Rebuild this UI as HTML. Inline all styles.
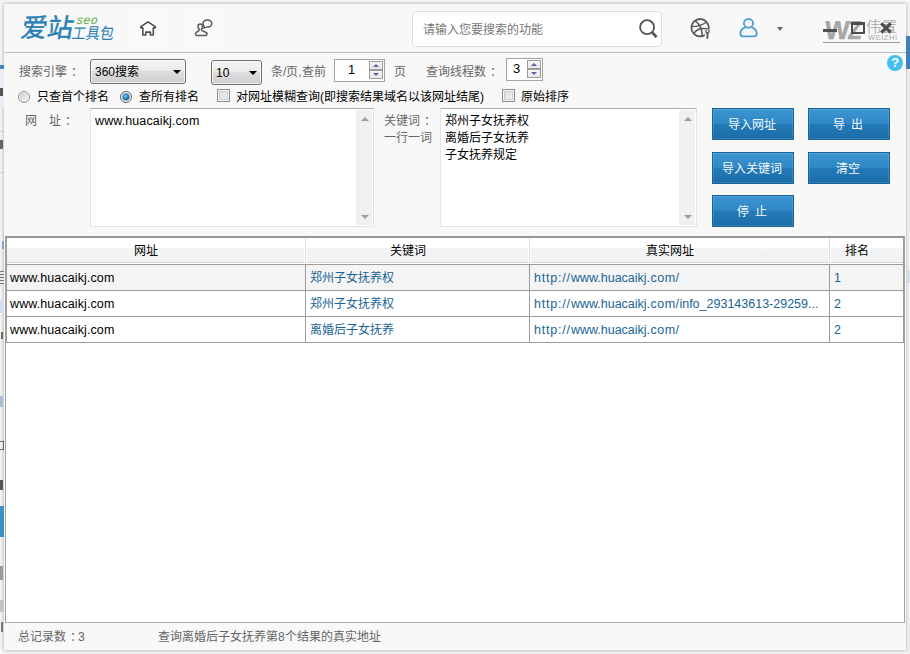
<!DOCTYPE html>
<html lang="zh-CN">
<head>
<meta charset="utf-8">
<title>爱站SEO工具包</title>
<style>
*{box-sizing:border-box;margin:0;padding:0}
html,body{width:910px;height:654px;overflow:hidden}
body{position:relative;background:#f7f7f7;font-family:"Liberation Sans",sans-serif;font-size:12px;color:#000}
.abs{position:absolute}
#win{position:absolute;left:4px;top:4px;width:902px;height:646px;background:#f8f8f8;box-shadow:0 0 4px rgba(0,0,0,.36)}
#sep{position:absolute;left:4px;top:52px;width:902px;height:1px;background:#bfbfbf}
.lbl{position:absolute;color:#666;white-space:nowrap;line-height:14px;height:14px}
.blk{position:absolute;color:#000;white-space:nowrap;line-height:14px;height:14px}

.combo{position:absolute;height:25px;border:1px solid #707070;border-radius:3px;background:linear-gradient(#f4f4f4 0%,#ebebeb 45%,#dddddd 50%,#cfcfcf 100%);box-shadow:inset 0 0 0 1px rgba(255,255,255,.7)}
.combo span{position:absolute;left:4px;top:5px;line-height:14px;color:#000;white-space:nowrap}
.combo i{position:absolute;right:4px;top:10px;width:0;height:0;border-left:4px solid transparent;border-right:4px solid transparent;border-top:4px solid #000}
.spin{position:absolute;background:#fff;border:1px solid #a3a3a3}
.spin span{position:absolute;top:3px;line-height:14px;color:#000;font-size:13px}
.spin b{position:absolute;right:1px;width:14px;height:9px;border:1px solid #9c9c9c;background:linear-gradient(#f6f6f6,#e6e6e6)}
.spin b::after{content:"";position:absolute;left:3px;top:2px;width:0;height:0;border-left:3px solid transparent;border-right:3px solid transparent}
.spin b.u{top:1px}.spin b.d{top:10px}
.spin b.u::after{border-bottom:3px solid #5563a8}
.spin b.d::after{border-top:3px solid #5563a8}
.radio{position:absolute;width:12px;height:12px;border-radius:50%;border:1px solid #8e8f8f;background:linear-gradient(135deg,#c9cdd1 10%,#f2f2f2 90%);box-shadow:inset 0 0 0 1px #f6f6f6}
.radio.on{border-color:#5d6670}
.radio.on::after{content:"";position:absolute;left:2px;top:2px;width:6px;height:6px;border-radius:50%;background:radial-gradient(circle at 42% 38%,#8fd8fa 0%,#2785c2 40%,#0d4876 100%);box-shadow:0 0 0 .5px #1a4f7c}
.chk{position:absolute;width:13px;height:13px;border:1px solid #8e8f8f;background:linear-gradient(135deg,#d8d8d8,#f6f6f6);box-shadow:inset 0 0 0 1px #f4f4f4, inset 0 0 0 2px #cfcfcf}

.ta{position:absolute;background:#fff;border:1px solid #e1e5ea;border-top-color:#a9abb0}
.ta .sb{position:absolute;right:1px;top:1px;bottom:1px;width:16px;background:#f0f0f0}
.ta .sb::before{content:"";position:absolute;left:5px;top:7px;width:0;height:0;border-left:4px solid transparent;border-right:4px solid transparent;border-bottom:4px solid #9c9c9c}
.ta .sb::after{content:"";position:absolute;left:5px;bottom:6px;width:0;height:0;border-left:4px solid transparent;border-right:4px solid transparent;border-top:4px solid #9c9c9c}
.ta p{position:absolute;left:4px;line-height:17px;height:17px;white-space:nowrap;color:#000}
.btn{position:absolute;width:82px;height:32px;border:1px solid #1a6299;background:linear-gradient(#3c96d1 0%,#2f87c5 48%,#237ab8 52%,#1b6da7 100%);color:#f4f9fd;text-align:center;padding-top:1px;padding-right:2px;line-height:31px;white-space:nowrap;box-shadow:inset 0 0 0 1px rgba(255,255,255,.12)}

#grid{position:absolute;left:5px;top:236px;width:900px;height:387px;border:1px solid #a2a2a2;border-top:2px solid #979797;border-bottom:1px solid #adadad;background:#fff;overflow:hidden}
#hdr{position:absolute;left:0;top:0;width:898px;height:26px;border-left:1px solid #9c9c9c;border-right:1px solid #9c9c9c;background:linear-gradient(#fff 0,#fff 10px,#f4f5f7 10px,#eff0f2 24px,#d6d6d6 24px,#d6d6d6 25px,#fff 25px)}
#hdr span{position:absolute;top:6px;line-height:14px;text-align:center;color:#000;white-space:nowrap}
#hdr i{position:absolute;top:0;width:3px;height:25px;background:linear-gradient(90deg,#fff 0,#fff 1px,#dcdcdc 1px,#dcdcdc 2px,#fff 2px)}
.row{position:absolute;left:0;width:898px;height:26px;border-top:1px solid #9c9c9c;border-left:1px solid #9c9c9c;border-right:1px solid #9c9c9c}
.row.last{border-bottom:1px solid #9c9c9c;height:27px}
.row.sel{background:#f4f4f4}
.row span{position:absolute;top:6px;line-height:14px;white-space:nowrap;font-size:12.5px}
.row span.k{font-size:12px;color:#1a6494}
.row span.u{color:#1a6494}
.row i{position:absolute;top:0;width:1px;height:26px;background:#9c9c9c}
#status{position:absolute;left:4px;top:624px;width:902px;height:26px;background:#f8f8f8}
.c{margin-left:4px}
.row b{font-weight:normal}
</style>
</head>
<body>
<div id="win"></div>
<div id="sep"></div>

<!-- fragments of background windows visible at the screen edges -->
<div class="abs" style="left:0;top:69px;width:4px;height:40px;background:#e9eef5"></div>
<div class="abs" style="left:0;top:88px;width:3px;height:8px;background:#555"></div>
<div class="abs" style="left:0;top:140px;width:3px;height:9px;background:#666"></div>
<div class="abs" style="left:0;top:131px;width:4px;height:1px;background:#d0d0d0"></div>
<div class="abs" style="left:0;top:172px;width:4px;height:1px;background:#d0d0d0"></div>
<div class="abs" style="left:2px;top:241px;width:2px;height:8px;background:#7da3d6"></div>
<div class="abs" style="left:0;top:271px;width:4px;height:13px;background:repeating-linear-gradient(#777 0,#777 1px,#e8e8e8 1px,#e8e8e8 3px)"></div>
<div class="abs" style="left:0;top:300px;width:4px;height:13px;background:#d3e0ef"></div>
<div class="abs" style="left:1px;top:332px;width:2px;height:7px;background:#666"></div>
<div class="abs" style="left:0;top:396px;width:3px;height:11px;background:#a9bfd6"></div>
<div class="abs" style="left:0;top:441px;width:4px;height:9px;border:1px solid #666;border-left:0"></div>
<div class="abs" style="left:0;top:480px;width:3px;height:10px;background:#555"></div>
<div class="abs" style="left:0;top:506px;width:4px;height:31px;background:#3f8fc8"></div>
<div class="abs" style="left:0;top:566px;width:3px;height:14px;background:#9a9a9a"></div>
<div class="abs" style="left:0;top:600px;width:4px;height:12px;background:#c4c4c4"></div>
<div class="abs" style="left:1px;top:622px;width:2px;height:10px;background:#777"></div>
<div class="abs" style="left:907px;top:69px;width:3px;height:585px;background:linear-gradient(90deg,#e4e4e4,#f2f2f2)"></div>
<div class="abs" style="left:907px;top:270px;width:3px;height:13px;background:#d3dcea"></div>
<!-- background strips outside window -->
<div class="abs" style="left:0;top:65px;width:4px;height:4px;background:#3f86c4"></div>
<div class="abs" style="left:906px;top:36px;width:4px;height:33px;background:#3b7fc0"></div>

<!-- logo -->
<div class="abs" id="logo1" style="left:19px;top:13px;font-size:26px;line-height:30px;color:#2a80b6;font-weight:500;-webkit-text-stroke:.45px #2a80b6;white-space:nowrap;transform:skewX(-10deg);transform-origin:left bottom">爱站</div>
<div class="abs" id="logo2" style="left:77px;top:14px;font-size:12px;line-height:12px;color:#5aa845;font-style:italic;white-space:nowrap;letter-spacing:.6px;transform:skewX(-6deg)">seo</div>
<div class="abs" id="logo3" style="left:70px;top:26px;font-size:14px;line-height:16px;color:#2a80b6;white-space:nowrap;transform:skewX(-10deg) scaleY(1.14);transform-origin:left bottom;font-weight:500">工具包</div>

<div class="abs" style="left:129px;top:10px;width:38px;height:35px;background:#fafafa"></div>
<div class="abs" style="left:184px;top:10px;width:38px;height:35px;background:#fafafa"></div>
<!-- home icon -->
<svg class="abs" style="left:138px;top:19px" width="20" height="19" viewBox="0 0 20 19">
<path d="M10.05 2.8 L2.8 7.7 V8.7 H4.8 V16.05 H7.8 V13.1 H12.4 V16.05 H15.3 V8.7 H17.3 V7.7 Z" fill="none" stroke="#4f4f4f" stroke-width="1.6" stroke-linejoin="round"/>
</svg>
<!-- user-chat icon -->
<svg class="abs" style="left:193px;top:17px" width="22" height="21" viewBox="0 0 22 21">
<path d="M6.3 12.4 C5.4 11.6 5 10.6 5 9.4 C5 7.8 6 6.9 7.3 6.9 C8.6 6.9 9.6 7.8 9.6 9.4 C9.6 10.6 9.2 11.6 8.3 12.4 C8.3 13.5 9 13.9 10.4 14.3 C12.6 14.9 14.1 15.6 14.1 17 C14.1 18 13.6 18.4 12.7 18.4 H3.8 C2.9 18.4 2.4 18 2.4 17 C2.4 15.6 3.6 14.9 5 14.3 C6 13.9 6.3 13.5 6.3 12.4 Z" fill="none" stroke="#5a5a5a" stroke-width="1.5" stroke-linejoin="round"/>
<path d="M11.6 8.6 L10.6 11.2 L13.6 9.9 Z" fill="#fafafa" stroke="#5a5a5a" stroke-width="1.3" stroke-linejoin="round"/>
<ellipse cx="14.4" cy="6.5" rx="4.4" ry="3.6" fill="#fafafa" stroke="#5a5a5a" stroke-width="1.5"/>
<path d="M11.9 8.4 L13.2 9.6" stroke="#fafafa" stroke-width="1.6"/>
</svg>

<!-- search box -->
<div class="abs" style="left:412px;top:11px;width:250px;height:36px;background:#fff;border:1px solid #dcdcdc;border-radius:4px"></div>
<div class="abs" style="left:423px;top:23px;color:#777;line-height:14px;white-space:nowrap">请输入您要搜索的功能</div>
<svg class="abs" style="left:638px;top:18px" width="22" height="22" viewBox="0 0 22 22">
<circle cx="9.1" cy="9.2" r="7" fill="none" stroke="#525252" stroke-width="1.8"/>
<path d="M14.2 14.3 L18.6 19.2" stroke="#525252" stroke-width="2.7" stroke-linecap="butt"/>
</svg>

<!-- globe/wrench icon -->
<svg class="abs" style="left:689px;top:17px" width="23" height="23" viewBox="0 0 23 23">
<circle cx="11.1" cy="10.7" r="8.7" fill="none" stroke="#585858" stroke-width="1.8"/>
<path d="M6.2 3.8 C10 6.4 13 11 13.2 18.8 M2.8 9.6 C7.4 9.6 13 8.4 17.6 5 M4.6 16.6 C7.4 12.6 12.4 10.6 19.4 12.2" fill="none" stroke="#585858" stroke-width="1.5"/>
<rect x="15.8" y="12.6" width="5.4" height="9.4" fill="#f8f8f8"/>
<path d="M18.4 16.4 V21" stroke="#585858" stroke-width="1.9" stroke-linecap="round"/>
<path d="M16.9 13 V14.6 C16.9 15.6 17.6 16.2 18.4 16.2 C19.2 16.2 19.9 15.6 19.9 14.6 V13" fill="none" stroke="#585858" stroke-width="1.4"/>
</svg>

<!-- blue user icon -->
<svg class="abs" style="left:737px;top:17px" width="24" height="23" viewBox="0 0 24 23">
<ellipse cx="11.5" cy="6.3" rx="4.6" ry="4.3" fill="none" stroke="#4c9fd9" stroke-width="1.8"/>
<path d="M7.6 10.6 C4.9 11.8 3.3 14 3.3 16.6 C3.3 18.6 4.2 19.3 5.6 19.3 H17.4 C18.8 19.3 19.7 18.6 19.7 16.6 C19.7 14 18.1 11.8 15.4 10.6" fill="none" stroke="#4c9fd9" stroke-width="1.8" stroke-linecap="round" stroke-linejoin="round"/>
</svg>
<div class="abs" style="left:777px;top:27px;width:0;height:0;border-left:3.5px solid transparent;border-right:3.5px solid transparent;border-top:4px solid #666"></div>

<!-- watermark -->
<div class="abs" style="left:825px;top:17px;font-size:26px;line-height:26px;font-weight:bold;color:#a6a6a6;-webkit-text-stroke:.4px #a6a6a6;letter-spacing:-1.5px;white-space:nowrap;transform:skewX(-4deg)">W<span style="display:inline-block;transform:scaleX(.86);transform-origin:left center">Z</span></div>
<div class="abs" style="left:866px;top:19px;font-size:15px;line-height:16px;color:#b2b2b2;font-weight:500;white-space:nowrap;letter-spacing:0.5px">伟置</div>
<div class="abs" style="left:868px;top:34px;font-size:7.5px;line-height:8px;color:#a9a9a9;white-space:nowrap;letter-spacing:.55px">WEIZHI</div>
<div class="abs" style="left:823px;top:42px;width:77px;height:1px;background:#9a9a9a"></div>

<!-- window controls -->
<div class="abs" style="left:823px;top:29px;width:14px;height:3px;background:#505050"></div>
<div class="abs" style="left:851px;top:22px;width:14px;height:12px;border:2px solid #4d4d4d;border-top-width:3px"></div>
<svg class="abs" style="left:879px;top:21px" width="14" height="14" viewBox="0 0 14 14">
<path d="M2.2 2.4 L11.8 11.6 M11.8 2.4 L2.2 11.6" stroke="#4d4d4d" stroke-width="3.2"/>
</svg>

<!-- help -->
<div class="abs" style="left:887px;top:55px;width:16px;height:16px;border-radius:8px;background:#45bff0;color:#fff;font-weight:bold;font-size:13.5px;line-height:16.5px;text-align:center">?</div>

<!-- row 1 -->
<div class="lbl" style="left:19px;top:65px">搜索引擎<span class="c">：</span></div>
<div class="combo" style="left:90px;top:59px;width:96px"><span>360搜索</span><i></i></div>
<div class="combo" style="left:211px;top:60px;width:51px"><span>10</span><i></i></div>
<div class="lbl" style="left:271px;top:65px">条/页,查前</div>
<div class="spin" style="left:334px;top:59px;width:51px;height:23px"><span style="left:13px">1</span><b class="u"></b><b class="d"></b></div>
<div class="lbl" style="left:394px;top:65px">页</div>
<div class="lbl" style="left:426px;top:65px">查询线程数<span class="c">：</span></div>
<div class="spin" style="left:506px;top:58px;width:37px;height:23px"><span style="left:6px">3</span><b class="u"></b><b class="d"></b></div>

<!-- row 2 -->
<div class="radio" style="left:18px;top:91px"></div>
<div class="blk" style="left:37px;top:90px">只查首个排名</div>
<div class="radio on" style="left:120px;top:91px"></div>
<div class="blk" style="left:139px;top:90px">查所有排名</div>
<div class="chk" style="left:217px;top:89px"></div>
<div class="blk" style="left:236px;top:90px">对网址模糊查询(即搜索结果域名以该网址结尾)</div>
<div class="chk" style="left:502px;top:89px"></div>
<div class="blk" style="left:521px;top:90px">原始排序</div>

<!-- text areas -->
<div class="lbl" style="left:25px;top:114px">网<span style="margin-left:11.5px">址</span><span class="c">：</span></div>
<div class="ta" style="left:90px;top:108px;width:284px;height:119px"><p style="top:4px;font-size:12.5px;letter-spacing:.1px">www.huacaikj.com</p><div class="sb"></div></div>
<div class="lbl" style="left:384px;top:114px">关键词<span class="c">：</span></div>
<div class="lbl" style="left:384px;top:131px">一行一词</div>
<div class="ta" style="left:440px;top:108px;width:257px;height:119px"><p style="top:4px">郑州子女抚养权</p><p style="top:21px">离婚后子女抚养</p><p style="top:38px">子女抚养规定</p><div class="sb"></div></div>

<!-- buttons -->
<div class="btn" style="left:712px;top:108px">导入网址</div>
<div class="btn" style="left:808px;top:108px">导&nbsp;&nbsp;出</div>
<div class="btn" style="left:712px;top:152px">导入关键词</div>
<div class="btn" style="left:808px;top:152px">清空</div>
<div class="btn" style="left:712px;top:195px">停&nbsp;&nbsp;止</div>

<!-- result grid -->
<div id="grid">
<div id="hdr"><span style="left:0;width:278px">网址</span><i style="left:297px"></i><span style="left:299px;width:203px">关键词</span><i style="left:521px"></i><span style="left:523px;width:279px">真实网址</span><i style="left:821px"></i><span style="left:823px;width:53px">排名</span></div>
<div class="row sel" style="top:26px"><span style="left:3px;letter-spacing:0.1px">www.huacaikj.com</span><i style="left:298px"></i><span class="k" style="left:303px">郑州子女抚养权</span><i style="left:522px"></i><span class="u" style="left:527px;letter-spacing:0px"><b style="letter-spacing:.8px">http://</b>www.huacaikj<b style="letter-spacing:.45px">.com/</b></span><i style="left:822px"></i><span class="u" style="left:827px">1</span></div>
<div class="row " style="top:52px"><span style="left:3px;letter-spacing:0.1px">www.huacaikj.com</span><i style="left:298px"></i><span class="k" style="left:303px">郑州子女抚养权</span><i style="left:522px"></i><span class="u" style="left:527px;letter-spacing:0px"><b style="letter-spacing:.8px">http://</b>www.huacaikj<b style="letter-spacing:.45px">.com/</b><b style="letter-spacing:0px">info_293143613-29259...</b></span><i style="left:822px"></i><span class="u" style="left:827px">2</span></div>
<div class="row last" style="top:78px"><span style="left:3px;letter-spacing:0.1px">www.huacaikj.com</span><i style="left:298px"></i><span class="k" style="left:303px">离婚后子女抚养</span><i style="left:522px"></i><span class="u" style="left:527px;letter-spacing:0px"><b style="letter-spacing:.8px">http://</b>www.huacaikj<b style="letter-spacing:.45px">.com/</b></span><i style="left:822px"></i><span class="u" style="left:827px">2</span></div>
</div>

<!-- status bar -->
<div class="lbl" style="left:18px;top:630px">总记录数<span class="c">：</span><span style="margin-left:-4px">3</span></div>
<div class="lbl" style="left:158px;top:630px">查询离婚后子女抚养第8个结果的真实地址</div>

</body>
</html>
